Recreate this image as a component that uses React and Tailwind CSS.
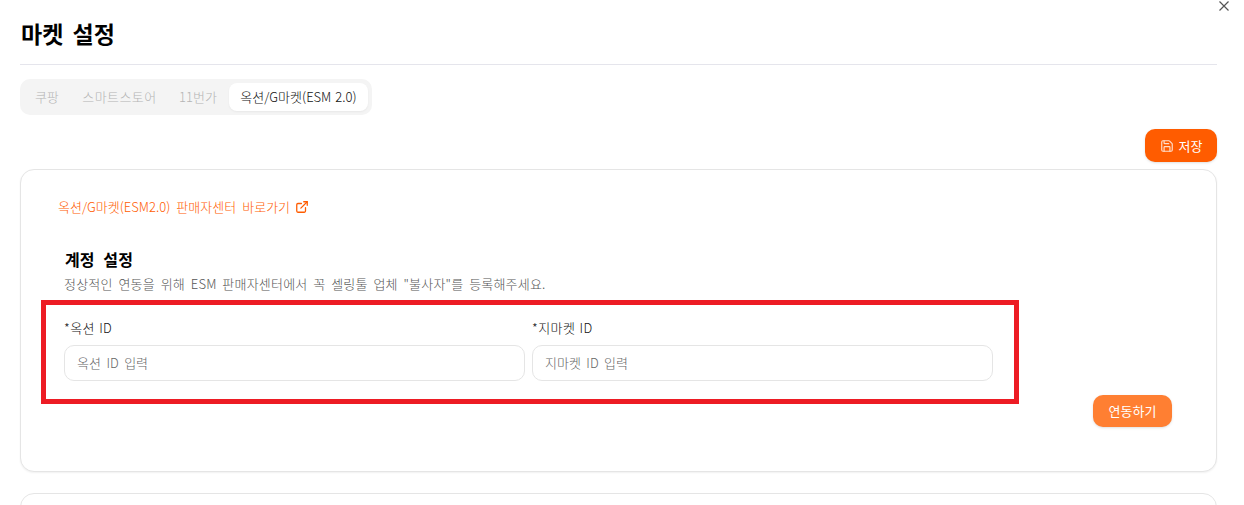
import React from "react";

function SaveIcon() {
  return (
    <svg width="14" height="14" viewBox="0 0 24 24" fill="none" stroke="currentColor" strokeWidth="2" strokeLinecap="round" strokeLinejoin="round" className="opacity-80">
      <path d="M15.2 3a2 2 0 0 1 1.4.6l3.8 3.8a2 2 0 0 1 .6 1.4V19a2 2 0 0 1-2 2H5a2 2 0 0 1-2-2V5a2 2 0 0 1 2-2z" />
      <path d="M17 21v-7a1 1 0 0 0-1-1H8a1 1 0 0 0-1 1v7" />
      <path d="M7 3v4a1 1 0 0 0 1 1h7" />
    </svg>
  );
}

function ExternalIcon() {
  return (
    <svg width="14" height="14" viewBox="0 0 24 24" fill="none" stroke="currentColor" strokeWidth="2.2" strokeLinecap="round" strokeLinejoin="round">
      <path d="M18 13v6a2 2 0 0 1-2 2H5a2 2 0 0 1-2-2V8a2 2 0 0 1 2-2h6" />
      <path d="M15 3h6v6" />
      <path d="M10 14 21 3" />
    </svg>
  );
}

function Field({ label, placeholder, className }) {
  return (
    <div className={className}>
      <label className="block h-[17px] text-[13px] font-light leading-[15px] tracking-[0.4px] [word-spacing:1px] text-[#111111] mb-[8px]">{label}</label>
      <input
        placeholder={placeholder}
        className="block w-full h-[36px] rounded-[10px] border border-[#e5e5e5] bg-white px-[12px] pb-[2px] text-[13px] font-light [word-spacing:2.6px] outline-none placeholder:text-[#666666]"
      />
    </div>
  );
}

export default function App() {
  return (
    <div className="relative h-[505px] w-[1244px] overflow-hidden bg-white font-['Noto_Sans_CJK_KR','Noto_Sans',sans-serif]">
      <button className="absolute left-[1218px] top-0 flex h-[12px] w-[12px] items-center justify-center text-[#555555]">
        <svg width="10" height="10" viewBox="0 0 10 10" fill="none" stroke="currentColor" strokeWidth="1.2">
          <path d="M0.5 0.5 9.5 9.5M9.5 0.5 0.5 9.5" />
        </svg>
      </button>

      <div className="ml-[20px] w-[1197px]">
        <header className="h-[65px] border-b border-[#e5e5ec] pt-[18px] pl-px">
          <h1 className="text-[23px] font-bold leading-[30px] [word-spacing:4px] text-black">마켓 설정</h1>
        </header>

        <div className="mt-[14px] flex h-[36px] w-[352px] items-center gap-[2px] rounded-[10px] bg-[#f4f4f4] px-[4px] text-[13px] font-light text-[#b5b5b5]">
          <span className="w-[46px] text-center">쿠팡</span>
          <span className="w-[96px] text-center tracking-[0.4px]">스마트스토어</span>
          <span className="w-[58px] text-center">11번가</span>
          <span className="flex h-[28px] w-[140px] items-center justify-center rounded-[8px] bg-white text-[#111111] [word-spacing:1px] shadow-[0_1px_2px_rgba(0,0,0,0.05)]">옥션/G마켓(ESM 2.0)</span>
        </div>

        <div className="mt-[14px] flex justify-end">
          <button className="flex h-[33px] w-[72px] items-center justify-center gap-[5px] rounded-[10px] bg-[#ff5c00] text-[13px] text-white shadow-sm">
            <SaveIcon />
            저장
          </button>
        </div>

        <section className="mt-[7px] h-[303px] rounded-[14px] border border-[#e5e5e5] bg-white shadow-[0_1px_2px_rgba(0,0,0,0.06)]">
          <a className="ml-[37px] mt-[28px] flex h-[18px] items-center gap-[5px] text-[13px] font-light [word-spacing:3.2px] text-[#ff5c00]">
            옥션/G마켓(ESM2.0) 판매자센터 바로가기
            <ExternalIcon />
          </a>
          <div className="ml-[43px] w-[929px]">
            <h2 className="mt-[32px] ml-[1px] text-[16px] font-bold leading-[22px] [word-spacing:5px] tracking-[0.1px] text-black">계정 설정</h2>
            <p className="mt-[5px] h-[18px] text-[13px] font-light leading-[18px] tracking-[0.2px] [word-spacing:2.7px] text-[#555555]">
              정상적인 연동을 위해 ESM 판매자센터에서 꼭 셀링툴 업체 "불사자"를 등록해주세요.
            </p>
            <div className="mt-[27px] flex gap-[7px]">
              <Field className="w-[461px]" label="*옥션 ID" placeholder="옥션 ID 입력" />
              <Field className="w-[461px]" label="*지마켓 ID" placeholder="지마켓 ID 입력" />
            </div>
          </div>
          <div className="mt-[14px] flex justify-end pr-[44px]">
            <button className="h-[32px] w-[79px] rounded-[10px] bg-[#ff7f32] text-[13px] text-white shadow-sm">연동하기</button>
          </div>
        </section>

        <section className="mt-[21px] h-[40px] rounded-[14px] border border-[#e5e5e5] bg-white" />
      </div>

      <div className="pointer-events-none absolute left-[41px] top-[300px] h-[104px] w-[978px] border-[5px] border-[#ed1c24]" />
    </div>
  );
}
